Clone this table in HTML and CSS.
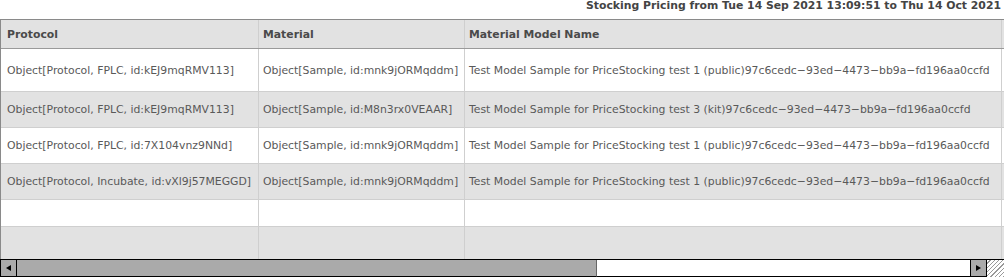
FILE: index.html
```html
<!DOCTYPE html>
<html>
<head>
<meta charset="utf-8">
<link rel="stylesheet" href="styles.css">
</head>
<body>
<div class="title">Stocking Pricing from Tue 14 Sep 2021 13:09:51 to Thu 14 Oct 2021</div>
<div class="grid">
  <div class="row head">
    <div class="cell c1">Protocol</div>
    <div class="cell c2">Material</div>
    <div class="cell c3">Material Model Name</div>
    <div class="cell c4">S</div>
  </div>
  <div class="row r1">
    <div class="cell c1">Object[Protocol, FPLC, id:kEJ9mqRMV113]</div>
    <div class="cell c2">Object[Sample, id:mnk9jORMqddm]</div>
    <div class="cell c3">Test Model Sample for PriceStocking test 1 (public)97c6cedc−93ed−4473−bb9a−fd196aa0ccfd</div>
    <div class="cell c4 link">M</div>
  </div>
  <div class="row alt">
    <div class="cell c1">Object[Protocol, FPLC, id:kEJ9mqRMV113]</div>
    <div class="cell c2">Object[Sample, id:M8n3rx0VEAAR]</div>
    <div class="cell c3">Test Model Sample for PriceStocking test 3 (kit)97c6cedc−93ed−4473−bb9a−fd196aa0ccfd</div>
    <div class="cell c4 link">M</div>
  </div>
  <div class="row">
    <div class="cell c1">Object[Protocol, FPLC, id:7X104vnz9NNd]</div>
    <div class="cell c2">Object[Sample, id:mnk9jORMqddm]</div>
    <div class="cell c3">Test Model Sample for PriceStocking test 1 (public)97c6cedc−93ed−4473−bb9a−fd196aa0ccfd</div>
    <div class="cell c4 link">M</div>
  </div>
  <div class="row alt">
    <div class="cell c1">Object[Protocol, Incubate, id:vXl9j57MEGGD]</div>
    <div class="cell c2">Object[Sample, id:mnk9jORMqddm]</div>
    <div class="cell c3">Test Model Sample for PriceStocking test 1 (public)97c6cedc−93ed−4473−bb9a−fd196aa0ccfd</div>
    <div class="cell c4 link">M</div>
  </div>
  <div class="row r5">
    <div class="cell c1"></div>
    <div class="cell c2"></div>
    <div class="cell c3"></div>
    <div class="cell c4"></div>
  </div>
  <div class="row alt r6">
    <div class="cell c1"></div>
    <div class="cell c2"></div>
    <div class="cell c3"></div>
    <div class="cell c4"></div>
  </div>
</div>
<div class="scrollbar">
  <div class="sb-btn"><span class="tri-left"></span></div>
  <div class="sb-thumb"></div>
  <div class="sb-track"></div>
  <div class="sb-btn sb-right"><span class="tri-right"></span></div>
  <div class="grip"></div>
</div>
</body>
</html>
```
FILE: styles.css
```css
* { box-sizing: border-box; }
html, body { margin: 0; padding: 0; background: #fff; }
body {
  width: 1004px;
  height: 277px;
  overflow: hidden;
  font-family: "DejaVu Sans", sans-serif;
  font-size: 10.85px;
  color: #595959;
}
.title {
  height: 19px;
  padding: 0 3px 0 0;
  line-height: 12px;
  text-align: right;
  font-weight: bold;
  color: #444;
  white-space: nowrap;
}
.grid {
  height: 240px;
  border-top: 1px solid #8a8a8a;
  border-left: 1px solid #8a8a8a;
  overflow: hidden;
  display: flex;
  flex-direction: column;
}
.row {
  display: flex;
  flex: none;
  height: 36px;
  border-bottom: 1px solid #cfcfcf;
  background: #fff;
}
.row.alt { background: #e2e2e2; }
.row.head {
  height: 29px;
  background: #e2e2e2;
  border-bottom: 1px solid #9a9a9a;
  font-weight: bold;
  color: #4a4a4a;
}
.row.r1 { height: 43px; }
.row.r5 { height: 27px; }
.row.r6 { height: 33px; border-bottom: none; }
.cell {
  flex: none;
  display: flex;
  align-items: center;
  padding: 0 6px;
  white-space: nowrap;
  overflow: hidden;
  border-right: 1px solid #cfcfcf;
}
.c1 { width: 258px; }
.c2 { width: 206px; padding-left: 4px; }
.c3 { width: 537px; padding-left: 4px; }
.c4 { width: 100px; padding-left: 4px; border-right: none; }
.link { color: #3a9ad9; }
.scrollbar {
  height: 18px;
  display: flex;
  border-top: 1px solid #000;
}
.sb-btn {
  width: 17px;
  flex: none;
  background: #aaa;
  border: 1px solid #000;
  border-top: none;
  display: flex;
  align-items: center;
  justify-content: center;
}
.sb-thumb {
  width: 580px;
  flex: none;
  background: #aaa;
  border-bottom: 1px solid #000;
  border-right: 1px solid #666;
}
.sb-track {
  flex: 1;
  background: #fff;
  border-bottom: 1px solid #000;
}
.sb-right { border-left: 1px solid #000; }
.tri-left {
  width: 0; height: 0;
  border-top: 3px solid transparent;
  border-bottom: 3px solid transparent;
  border-right: 5px solid #000;
}
.tri-right {
  width: 0; height: 0;
  border-top: 3px solid transparent;
  border-bottom: 3px solid transparent;
  border-left: 5px solid #000;
}
.grip {
  width: 17px;
  flex: none;
  background: repeating-linear-gradient(135deg, #fff 0 2px, #999 2px 3px);
}
```
